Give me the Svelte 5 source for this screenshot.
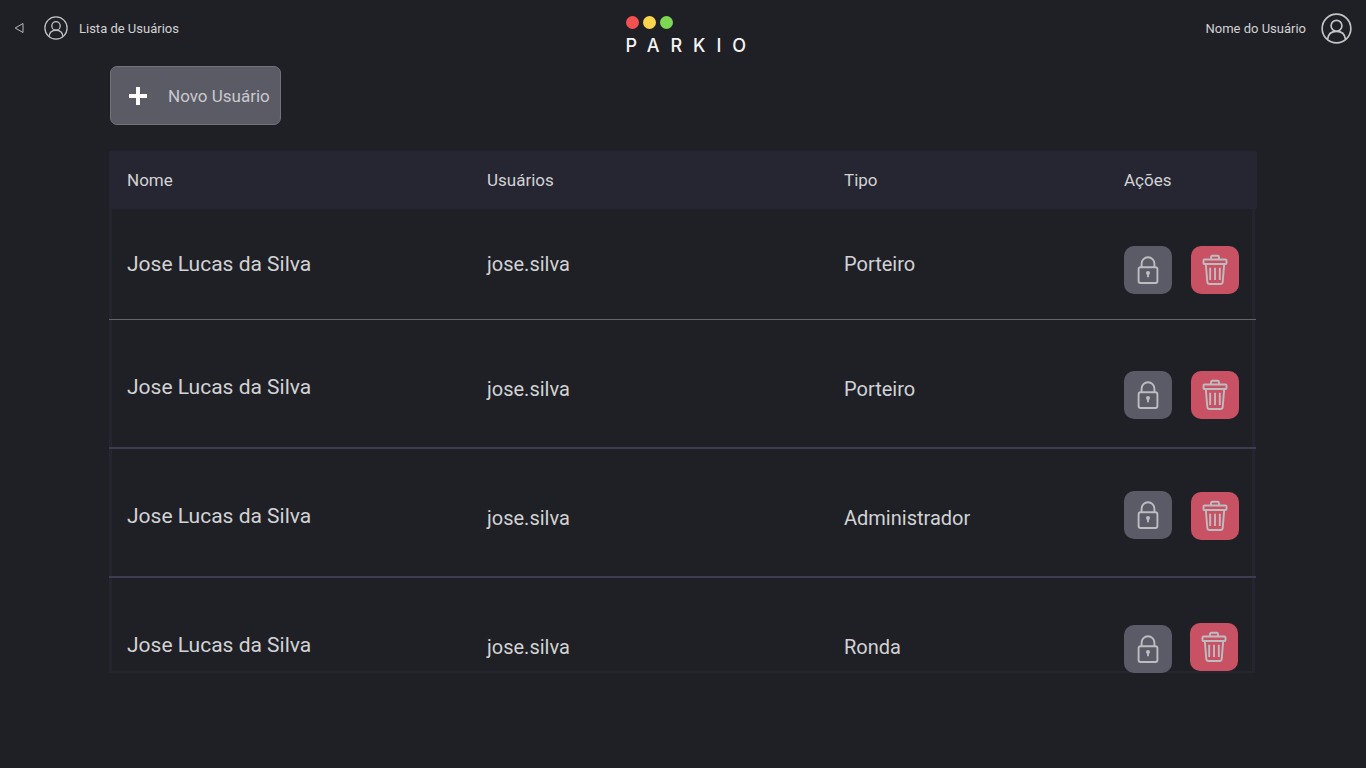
<script>
  const rows = [
    { name: 'Jose Lucas da Silva', user: 'jose.silva', type: 'Porteiro' },
    { name: 'Jose Lucas da Silva', user: 'jose.silva', type: 'Porteiro' },
    { name: 'Jose Lucas da Silva', user: 'jose.silva', type: 'Administrador' },
    { name: 'Jose Lucas da Silva', user: 'jose.silva', type: 'Ronda' }
  ];
</script>

{#snippet userIcon(cls)}
  <svg class={cls} viewBox="0 0 32 32" fill="none" stroke="currentColor" stroke-width="1.7">
    <circle cx="16" cy="16" r="14.8" />
    <circle cx="16" cy="13.2" r="5.6" />
    <path d="M6.8 27c.6-5.2 4-8 9.2-8s8.6 2.800 9.200 8" />
  </svg>
{/snippet}

<div class="page">
  <header class="top">
    <div class="left">
      <svg class="back" viewBox="0 0 10 12" fill="none" stroke="currentColor" stroke-width="1"><path d="M9 1.500v9L1.200 6z" /></svg>
      {@render userIcon('uicon small')}
      <span class="label">Lista de Usuários</span>
    </div>
    <div class="logo">
      <div class="dots"><i class="red"></i><i class="yellow"></i><i class="green"></i></div>
      <div class="brand">PARKIO</div>
    </div>
    <div class="right">
      <span class="label">Nome do Usuário</span>
      {@render userIcon('uicon big')}
    </div>
  </header>

  <main class="content">
    <button class="new">
      <svg class="plus" viewBox="0 0 18 18" fill="#fff"><path d="M7 0h4v7h7v4h-7v7H7v-7H0V7h7z" /></svg>
      <span>Novo Usuário</span>
    </button>

    <div class="thead">
      <span class="c-name">Nome</span>
      <span class="c-user">Usuários</span>
      <span class="c-type">Tipo</span>
      <span class="c-act">Ações</span>
    </div>

    <div class="tbody">
      {#each rows as r}
        <div class="row">
          <div class="c-name name">{r.name}</div>
          <div class="c-user cell">{r.user}</div>
          <div class="c-type cell">{r.type}</div>
          <div class="c-act actions">
            <button class="ibtn lock" aria-label="Bloquear">
              <svg viewBox="0 0 24 30" fill="none" stroke="currentColor" stroke-width="1.9" stroke-linejoin="round">
                <rect x="2.600" y="12.300" width="18.800" height="15.700" rx="2" />
                <path d="M5.600 12.300V8.600a6.400 6.400 0 0 1 12.800 0v3.700" />
                <circle cx="12" cy="18" r="1.100" fill="currentColor" />
                <path d="M12 18.500v3.700" />
              </svg>
            </button>
            <button class="ibtn trash" aria-label="Excluir">
              <svg viewBox="0 0 26 32" fill="none" stroke="currentColor" stroke-width="1.9" stroke-linejoin="round">
                <rect x="1.500" y="5.500" width="23" height="4.500" rx="1" />
                <path d="M9 5.500V3.200Q9 1.800 10.400 1.800h5.200Q17 1.800 17 3.200V5.500" />
                <path d="M3.800 10l1.500 18q.2 2 2.200 2h11q2 0 2.200-2l1.500-18" />
                <path d="M8.200 13.700v12.300M13 13.700v12.300M17.800 13.700v12.300" />
              </svg>
            </button>
          </div>
        </div>
      {/each}
    </div>
  </main>
</div>

<style>
  :global(body) {
    margin: 0;
    background: #1f2026;
  }
  .page {
    height: 768px;
    background: #1f2026;
    color: #d2d2d4;
    font-family: Roboto, "Liberation Sans", sans-serif;
    overflow: hidden;
  }
  .top {
    height: 56px;
    display: flex;
    justify-content: space-between;
    align-items: flex-start;
    padding: 0 14px;
    position: relative;
  }
  .left, .right {
    display: flex;
    align-items: center;
    height: 56px;
  }
  .back {
    width: 10px;
    height: 12px;
    color: #b8b8bc;
    margin-right: 20px;
  }
  .uicon { display: block; color: #c4c4c7; }
  .small { width: 24px; height: 24px; margin-right: 11px; }
  .big { width: 31px; height: 31px; margin-left: 15px; }
  .label { font-size: 13px; color: #d2d2d4; }
  .logo {
    position: absolute;
    left: 625.500px;
    top: 16px;
  }
  .dots { display: flex; gap: 4px; }
  .dots i { display: block; width: 13px; height: 13px; border-radius: 50%; }
  .red { background: #f4504f; }
  .yellow { background: #fbd44d; }
  .green { background: #7ed752; }
  .brand {
    font-family: Inter, Lato, sans-serif;
    font-weight: 500;
    font-size: 18px;
    line-height: 20px;
    letter-spacing: 11px;
    color: #f4f4f4;
    margin-top: 7px;
    white-space: nowrap;
  }
  .content {
    padding: 10px 0 0 110px;
    width: 1147px;
  }
  .new {
    display: flex;
    align-items: center;
    width: 171px;
    height: 59px;
    box-sizing: border-box;
    background: #5b5b66;
    border: 1px solid #72727c;
    border-radius: 7px;
    padding: 0 0 0 18px;
    color: #c9c9cd;
    font: 400 17px Roboto, sans-serif;
    margin-bottom: 26px;
  }
  .plus { width: 18px; height: 18px; margin-right: 21px; flex: none; }
  .thead {
    display: flex;
    height: 58px;
    align-items: center;
    background: #252632;
    margin-left: -1px;
    width: 1148px;
    font-size: 17px;
    color: #d2d2d4;
    border-radius: 2px;
  }
  .tbody {
    height: 464px;
    box-sizing: border-box;
    margin-left: -1px;
    width: 1146px;
    border-left: 3px solid #25252f;
    border-right: 3px solid #25252f;
    border-bottom: 2px solid #25252f;
  }
  .row {
    display: flex;
    align-items: flex-start;
    box-sizing: border-box;
    width: 1147px;
    margin-left: -3px;
    height: 129px;
    border-bottom: 2px solid #3d3c52;
  }
  .row:nth-child(1) { height: 111px; border-bottom: 1px solid #63636d; }
  .row:nth-child(4) { height: 93px; border-bottom: 0; }
  .c-name { width: 378px; padding-left: 18px; box-sizing: border-box; flex: none; }
  .c-user { width: 357px; flex: none; }
  .c-type { width: 280px; flex: none; }
  .c-act { flex: none; }
  .name { font-size: 21px; line-height: 24px; padding-top: 43px; }
  .cell { font-size: 20px; line-height: 24px; padding-top: 43px; }
  .row:nth-child(n+2) .name { padding-top: 55px; }
  .row:nth-child(n+2) .cell { padding-top: 57px; }
  .actions { display: flex; gap: 19px; padding-top: 37px; }
  .row:nth-child(2) .actions { padding-top: 51px; }
  .row:nth-child(3) .actions { padding-top: 42px; }
  .row:nth-child(4) .actions { padding-top: 47px; }
  .row:nth-child(3) .trash { margin-top: 1px; }
  .row:nth-child(4) .trash { margin-top: -2px; margin-left: -1px; }
  .ibtn {
    width: 48px;
    height: 48px;
    border: 0;
    border-radius: 10px;
    padding: 0;
    display: flex;
    align-items: center;
    justify-content: center;
    color: #bdbdc1;
    position: relative;
  }
  .lock { background: #5b5b67; }
  .trash { background: #c85163; }
  .lock svg { width: 24px; height: 30px; }
  .trash svg { width: 26px; height: 32px; }
</style>
